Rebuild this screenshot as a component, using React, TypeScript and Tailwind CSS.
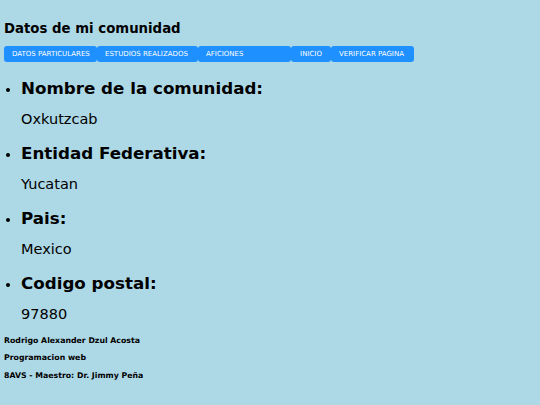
export default function App() {
  const items = [
    { label: "Nombre de la comunidad:", value: "Oxkutzcab" },
    { label: "Entidad Federativa:", value: "Yucatan" },
    { label: "Pais:", value: "Mexico" },
    { label: "Codigo postal:", value: "97880" },
  ];
  const links = [
    { text: "DATOS PARTICULARES", w: "w-[93px]" },
    { text: "ESTUDIOS REALIZADOS", w: "w-[101px]" },
    { text: "AFICIONES", w: "w-[93px]" },
    { text: "INICIO", w: "w-[40px]" },
    { text: "VERIFICAR PAGINA", w: "w-[83px]" },
  ];

  return (
    <div className="min-h-[405px] w-full bg-[#add8e6] px-[4px] pt-[21px] font-['DejaVu_Sans',sans-serif] text-black">
      <h1 className="text-[13.3px] font-bold leading-[16px]">Datos de mi comunidad</h1>

      {/* Menu */}
      <nav className="mt-[9px] flex h-[16px]">
        {links.map((l, i) => (
          <a
            key={l.text}
            href="#"
            className={`${l.w} flex h-full items-center rounded-[3px] bg-[#1e90ff] ${
              i === 3 ? "justify-center" : "pl-[8px]"
            } text-[7px] leading-none text-white`}
          >
            {l.text}
          </a>
        ))}
      </nav>

      <ul className="mt-[16px] flex list-disc flex-col gap-[15.5px] pl-[17px]">
        {items.map((it) => (
          <li key={it.label} className="text-[17px] marker:text-[13px]">
            <h2 className="text-[16.7px] font-bold leading-[20px]">{it.label}</h2>
            <p className="mt-[12.5px] text-[14.5px] leading-[17px]">{it.value}</p>
          </li>
        ))}
      </ul>

      <div className="mt-[13px] text-[7.8px] font-bold leading-[10px]">
        <p>Rodrigo Alexander Dzul Acosta</p>
        <p className="mt-[7.5px]">Programacion web</p>
        <p className="mt-[7.5px]">8AVS - Maestro: Dr. Jimmy Peña</p>
      </div>
    </div>
  );
}
